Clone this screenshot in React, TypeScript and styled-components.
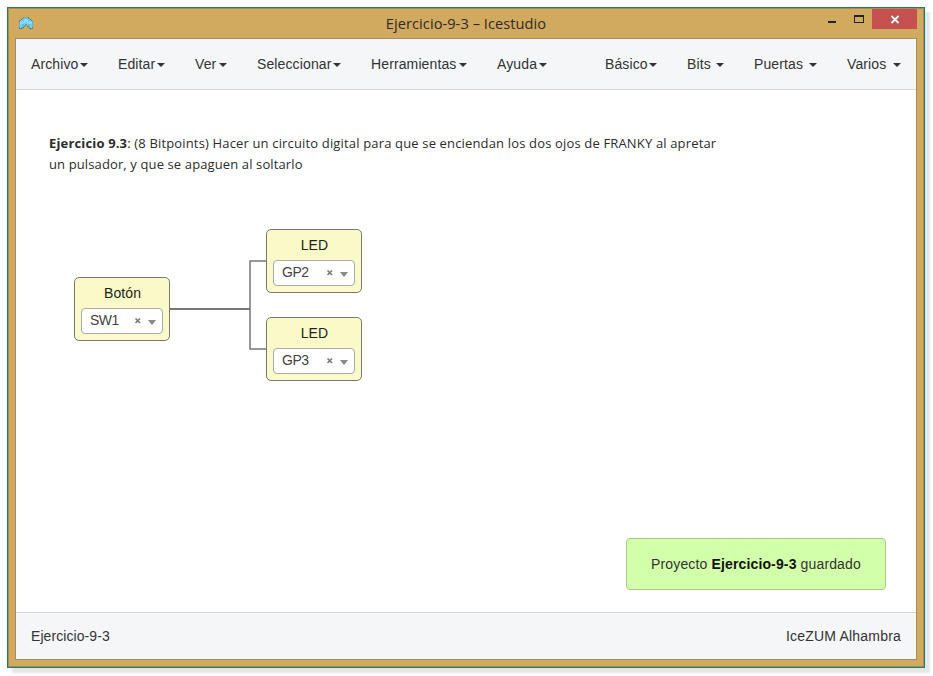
import React from 'react';
import styled, { createGlobalStyle } from 'styled-components';

const GlobalStyle = createGlobalStyle`
  * { box-sizing: border-box; }
  body {
    margin: 0;
    background: #fff;
    font-family: "Liberation Sans", Arial, sans-serif;
    font-size: 14px;
    color: #333;
  }
`;

const Desktop = styled.div`
  width: 933px;
  height: 676px;
  padding: 7px;
  overflow: hidden;
`;

const AppWindow = styled.div`
  width: 918px;
  height: 661px;
  display: flex;
  flex-direction: column;
  border: 1px solid #0e827b;
  background: #d2aa5f;
  box-shadow: inset 0 0 0 1px #a98a52, 5px 5px 2px #e6e6e6;
  padding: 1px 7px 7px;
`;

const TitleBar = styled.header`
  height: 29px;
  flex: none;
  display: grid;
  grid-template-columns: 120px 1fr 120px;
  align-items: start;
  padding-left: 3px;
`;

const AppIcon = styled.svg`
  width: 16px;
  height: 14px;
  margin-top: 7px;
`;

const Title = styled.h1`
  margin: 4px 0 0;
  padding-right: 3px;
  font: 400 14.6px/20px "Open Sans", "Noto Sans", sans-serif;
  letter-spacing: 0.06px;
  text-align: center;
  white-space: nowrap;
  color: #2d2a24;
`;

const Controls = styled.div`
  display: flex;
  justify-content: flex-end;
`;

const Control = styled.button<{ $width: number; $close?: boolean }>`
  width: ${(p) => p.$width}px;
  height: 20px;
  padding: 0;
  border: 0;
  display: block;
  background: ${(p) => (p.$close ? '#c75050' : 'transparent')};
  svg { display: block; width: 100%; height: 20px; }
`;

const Client = styled.div`
  flex: 1;
  min-height: 0;
  display: flex;
  flex-direction: column;
  border: 1px solid #a98c58;
  background: #fff;
`;

const MenuBar = styled.nav`
  height: 51px;
  flex: none;
  display: flex;
  justify-content: space-between;
  padding: 0 15px;
  background: #f4f6f8;
  border-bottom: 1px solid #d3d7dc;
`;

const MenuGroup = styled.div`
  display: flex;
  gap: 30px;
`;

const MenuItem = styled.button<{ $width: number }>`
  width: ${(p) => p.$width}px;
  display: flex;
  align-items: center;
  justify-content: space-between;
  padding: 0;
  border: 0;
  background: none;
  font: inherit;
  letter-spacing: 0.12px;
  white-space: nowrap;
  color: #333;
`;

const Caret = styled.span`
  flex: none;
  margin-top: 2px;
  border: 4px solid transparent;
  border-top-color: #333;
  border-bottom: 0;
`;

const Canvas = styled.main`
  position: relative;
  flex: 1;
`;

const Note = styled.p`
  margin: 43px 0 0 33px;
  font: 400 13px/21px "Open Sans", "Noto Sans", sans-serif;
  white-space: nowrap;
  color: #2c2c2c;
`;

const NoteLine = styled.span<{ $spacing: number }>`
  display: block;
  letter-spacing: ${(p) => p.$spacing}px;
`;

const Wires = styled.svg`
  position: absolute;
  left: 0;
  top: 0;
  width: 400px;
  height: 320px;
`;

const Block = styled.section<{ $x: number; $y: number }>`
  position: absolute;
  left: ${(p) => p.$x}px;
  top: ${(p) => p.$y}px;
  width: 96px;
  height: 64px;
  padding: 6px;
  border: 1px solid #777;
  border-radius: 5px;
  background: #fafac8;
`;

const BlockTitle = styled.div`
  height: 24px;
  padding-left: 1px;
  line-height: 19px;
  text-align: center;
  letter-spacing: 0.1px;
  color: #222;
`;

const Select = styled.div`
  height: 26px;
  display: flex;
  align-items: center;
  padding: 0 5px 2px 8px;
  border: 1px solid #aaa;
  border-radius: 4px;
  background: #fff;
  color: #444;
`;

const Value = styled.span`
  flex: 1;
  letter-spacing: -0.5px;
`;

const SelectGlyph = styled.svg`
  width: 23px;
  height: 10px;
  margin-top: 2px;
`;

const Toast = styled.div`
  position: absolute;
  right: 30px;
  bottom: 22px;
  width: 260px;
  height: 52px;
  border: 1px solid #a8c888;
  border-radius: 4px;
  background: #d2ffaa;
  text-align: center;
  line-height: 50px;
  letter-spacing: 0.14px;
  white-space: nowrap;
  b { color: #111; }
`;

const StatusBar = styled.footer`
  height: 47px;
  flex: none;
  display: flex;
  align-items: center;
  justify-content: space-between;
  padding: 0 15px;
  background: #f4f6f8;
  border-top: 1px solid #d3d7dc;
`;

const StatusText = styled.span<{ $spacing: number }>`
  letter-spacing: ${(p) => p.$spacing}px;
`;

type Menu = { label: string; width: number };

const mainMenus: Menu[] = [
  { label: 'Archivo', width: 57 },
  { label: 'Editar', width: 47 },
  { label: 'Ver', width: 32 },
  { label: 'Seleccionar', width: 84 },
  { label: 'Herramientas', width: 96 },
  { label: 'Ayuda', width: 50 },
];

const blockMenus: Menu[] = [
  { label: 'Básico', width: 52 },
  { label: 'Bits', width: 37 },
  { label: 'Puertas', width: 63 },
  { label: 'Varios', width: 54 },
];

const blocks = [
  { title: 'Botón', pin: 'SW1', x: 58, y: 187 },
  { title: 'LED', pin: 'GP2', x: 250, y: 139 },
  { title: 'LED', pin: 'GP3', x: 250, y: 227 },
];

const Menus = ({ items }: { items: Menu[] }) => (
  <MenuGroup>
    {items.map((m) => (
      <MenuItem key={m.label} $width={m.width}>
        {m.label}
        <Caret />
      </MenuItem>
    ))}
  </MenuGroup>
);

export default function App() {
  return (
    <Desktop>
      <GlobalStyle />
      <AppWindow>
        <TitleBar>
          <AppIcon viewBox="0 0 16 14">
            <path d="M1 5.5 6 1.5H10L15 5.5V12L12 13 8 8.5 4 13 1 12Z" fill="#74cdf2" />
            <path d="M2 6.5 5.5 7.5 8 3 10.5 7.5 14 6.5" stroke="#a9e8fc" fill="none" />
            <path d="M1 5.5 6 1.5M10 1.5 15 5.5M1 12 4 13 8 8.5 12 13 15 12" stroke="#1f4c5c" strokeDasharray="1.3 0.9" fill="none" />
            <path d="M6 1.5 8 2.5 10 1.5M1.3 6V12M14.7 6V12M5.5 7.5 4 12M10.5 7.5 12 12" stroke="#3f9cbc" strokeWidth="0.6" fill="none" />
          </AppIcon>
          <Title>Ejercicio-9-3 – Icestudio</Title>
          <Controls>
            <Control $width={27} aria-label="Minimizar">
              <svg viewBox="0 0 27 20"><path d="M10 12h8v2h-8z" fill="#222" /></svg>
            </Control>
            <Control $width={27} aria-label="Maximizar">
              <svg viewBox="0 0 27 20"><path d="M9 6h10v8H9zM10 8v5h8V8z" fill="#222" fillRule="evenodd" /></svg>
            </Control>
            <Control $width={45} $close aria-label="Cerrar">
              <svg viewBox="0 0 45 20"><path d="M19.5 7 26.5 14M26.5 7 19.5 14" stroke="#fff" strokeWidth="1.8" /></svg>
            </Control>
          </Controls>
        </TitleBar>
        <Client>
          <MenuBar>
            <Menus items={mainMenus} />
            <Menus items={blockMenus} />
          </MenuBar>
          <Canvas>
            <Note>
              <NoteLine $spacing={0.157}>
                <b>Ejercicio 9.3</b>: (8 Bitpoints) Hacer un circuito digital para que se enciendan los dos ojos de FRANKY al apretar
              </NoteLine>
              <NoteLine $spacing={0.12}>un pulsador, y que se apaguen al soltarlo</NoteLine>
            </Note>
            <Wires viewBox="0 0 400 320" fill="none" stroke="#777">
              <path d="M154 219H234" strokeWidth="2" />
              <path d="M250 171H234V259H250" strokeWidth="1.5" />
            </Wires>
            {blocks.map((b) => (
              <Block key={b.pin} $x={b.x} $y={b.y}>
                <BlockTitle>{b.title}</BlockTitle>
                <Select>
                  <Value>{b.pin}</Value>
                  <SelectGlyph viewBox="0 0 23 10">
                    <path d="M1.5 2.5 6 7M6 2.5 1.5 7" stroke="#777" strokeWidth="1.6" />
                    <path d="M14 4h8l-4 5z" fill="#888" />
                  </SelectGlyph>
                </Select>
              </Block>
            ))}
            <Toast>
              Proyecto <b>Ejercicio-9-3</b> guardado
            </Toast>
          </Canvas>
          <StatusBar>
            <StatusText $spacing={0.08}>Ejercicio-9-3</StatusText>
            <StatusText $spacing={0.2}>IceZUM Alhambra</StatusText>
          </StatusBar>
        </Client>
      </AppWindow>
    </Desktop>
  );
}
